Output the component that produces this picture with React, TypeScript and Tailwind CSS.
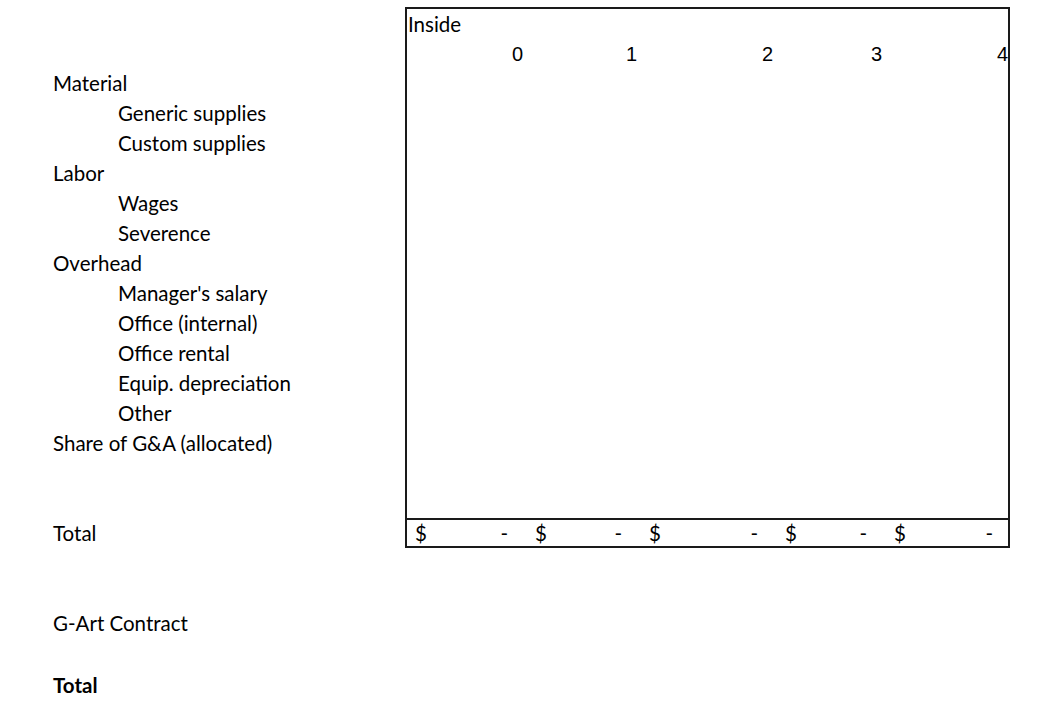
import React from "react";

const labels: { text: string; indent?: boolean; row: number; bold?: boolean }[] = [
  { text: "Material", row: 3 },
  { text: "Generic supplies", indent: true, row: 4 },
  { text: "Custom supplies", indent: true, row: 5 },
  { text: "Labor", row: 6 },
  { text: "Wages", indent: true, row: 7 },
  { text: "Severence", indent: true, row: 8 },
  { text: "Overhead", row: 9 },
  { text: "Manager's salary", indent: true, row: 10 },
  { text: "Office (internal)", indent: true, row: 11 },
  { text: "Office rental", indent: true, row: 12 },
  { text: "Equip. depreciation", indent: true, row: 13 },
  { text: "Other", indent: true, row: 14 },
  { text: "Share of G&A (allocated)", row: 15 },
];

const rowStart: Record<number, string> = {
  3: "row-start-3",
  4: "row-start-4",
  5: "row-start-5",
  6: "row-start-6",
  7: "row-start-7",
  8: "row-start-8",
  9: "row-start-9",
  10: "row-start-10",
  11: "row-start-11",
  12: "row-start-12",
  13: "row-start-13",
  14: "row-start-14",
  15: "row-start-15",
};

const colStart = ["col-start-2", "col-start-3", "col-start-4", "col-start-5", "col-start-6"];

export default function App() {
  return (
    <div
      className="w-[1055px] h-[723px] bg-white text-black overflow-hidden pt-[8px]"
      style={{ fontFamily: "Lato, 'Open Sans', sans-serif" }}
    >
      <div className="grid grid-cols-[405px_120px_114px_136px_109px_126px] auto-rows-[30px] text-[20.5px]">
        {/* table box */}
        <div className="col-start-2 col-span-5 row-start-1 row-span-18 border-2 border-[#1a1a1a] -mt-[1px]" />

        <div className="col-start-2 row-start-1 pl-[3px] leading-[32px]">Inside</div>
        {[0, 1, 2, 3, 4].map((n, i) => (
          <div
            key={n}
            className={`${colStart[i]} row-start-2 text-right pr-[2px] leading-[32px] text-[20px]`}
            style={{ fontFamily: "'Liberation Sans', Arial, sans-serif" }}
          >
            {n}
          </div>
        ))}

        {labels.map((l) => (
          <div
            key={l.text}
            className={`col-start-1 ${rowStart[l.row]} ${l.indent ? "pl-[118px]" : "pl-[53px]"} leading-[30px] whitespace-nowrap`}
          >
            {l.text}
          </div>
        ))}

        <div className="col-start-1 row-start-18 pl-[53px] leading-[30px]">Total</div>
        <div className="col-start-2 col-span-5 row-start-18 border-t-2 border-[#1a1a1a]" />
        {[0, 1, 2, 3, 4].map((n, i) => (
          <div key={n} className={`${colStart[i]} row-start-18 flex justify-between leading-[30px] pl-[10px] pr-[17px]`}>
            <span>$</span>
            <span>-</span>
          </div>
        ))}

        <div className="col-start-1 row-start-21 pl-[53px] leading-[30px]">G-Art Contract</div>
        <div className="col-start-1 row-start-23 pl-[53px] leading-[34px] font-bold">Total</div>
      </div>
    </div>
  );
}
